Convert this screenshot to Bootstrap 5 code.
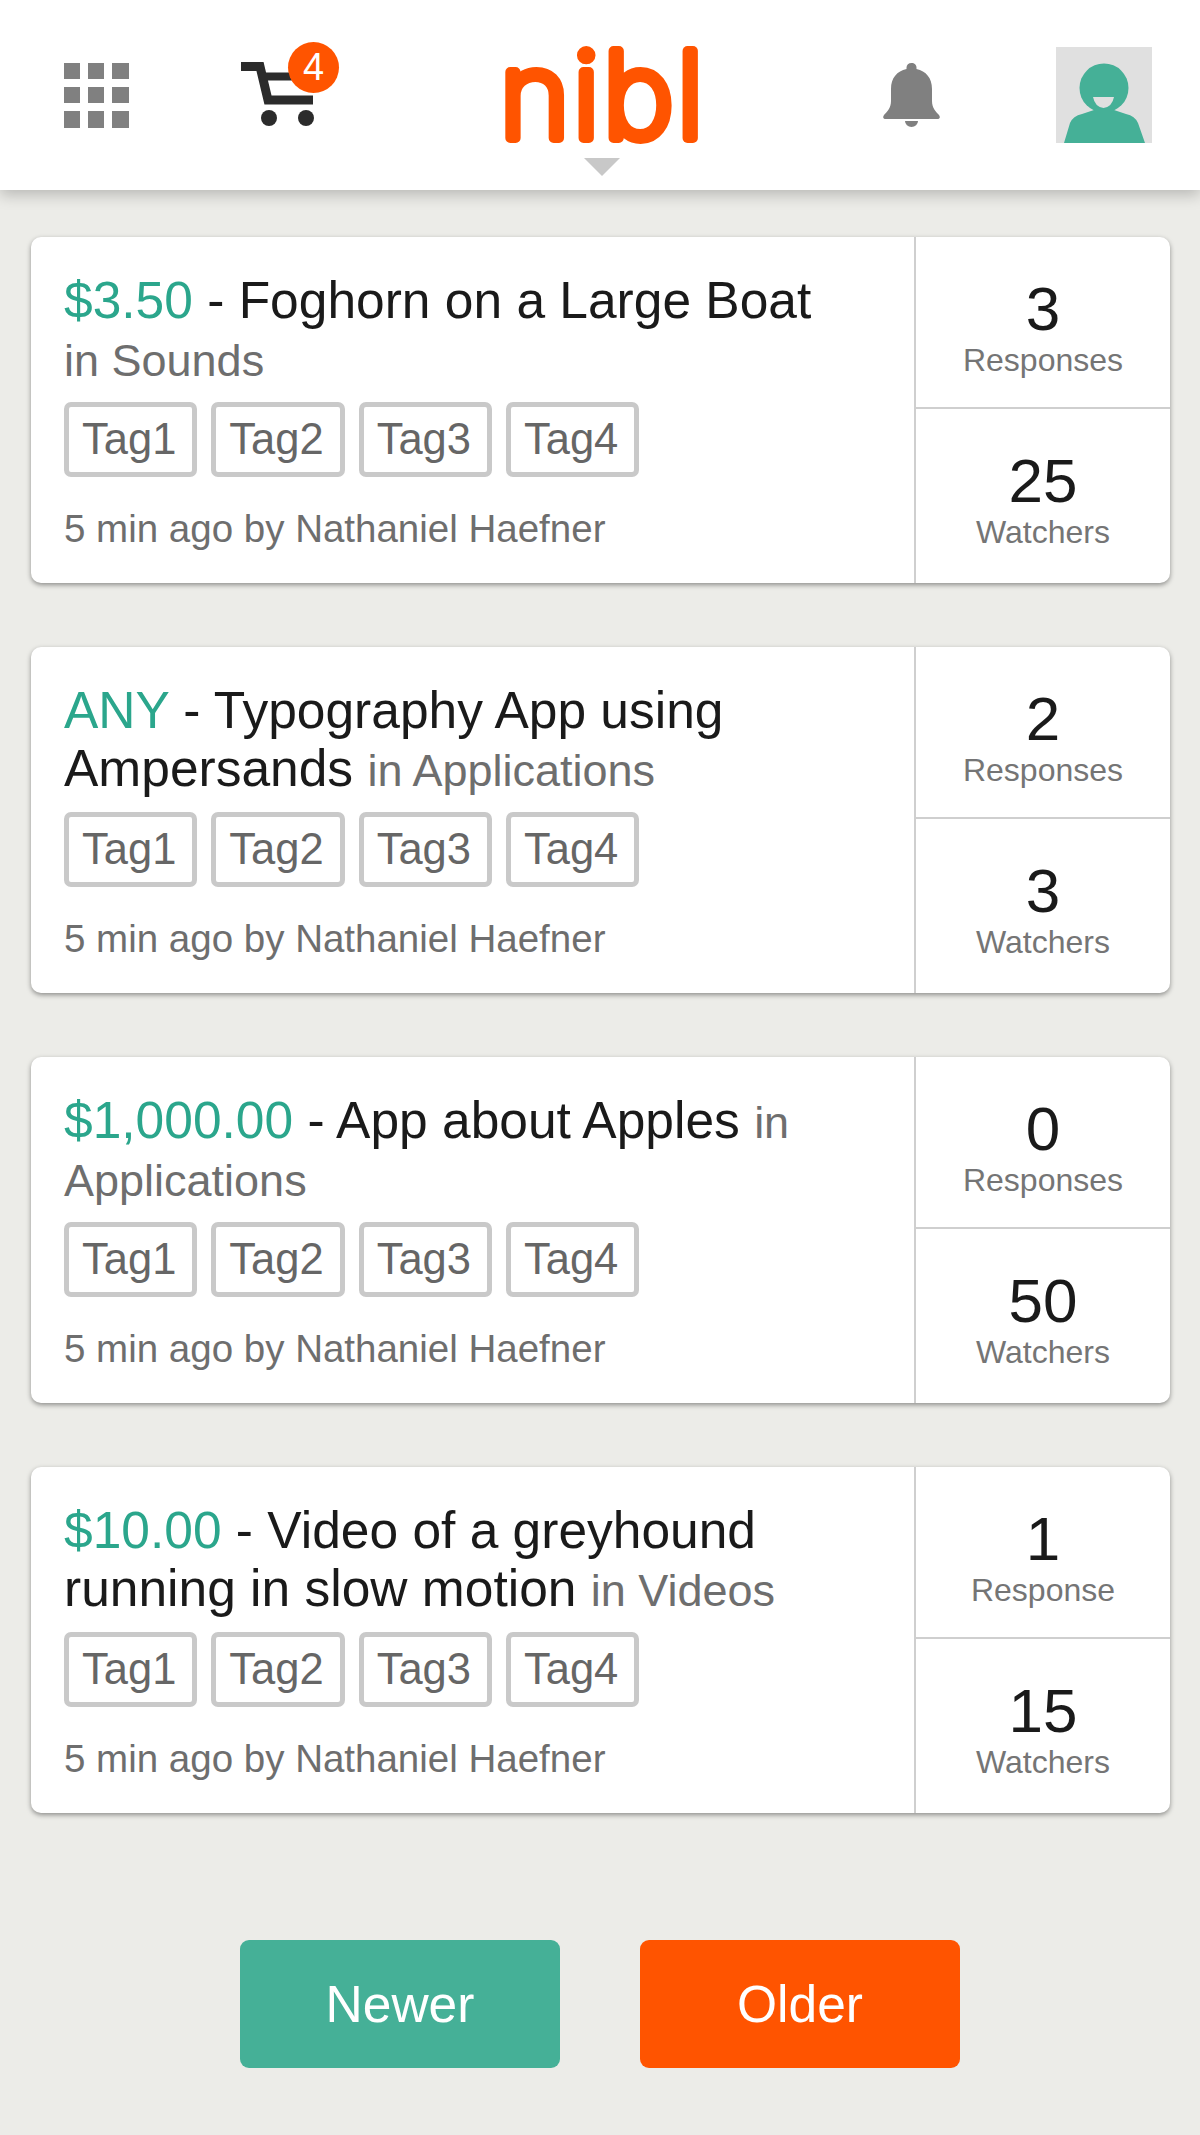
<!DOCTYPE html>
<html lang="en">
<head>
<meta charset="utf-8">
<title>nibl</title>
<link href="https://cdn.jsdelivr.net/npm/bootstrap@5.3.0/dist/css/bootstrap.min.css" rel="stylesheet">
<style>
html,body{margin:0;background:#ecece8;}
body{font-family:"Liberation Sans",Arial,sans-serif;min-height:2135px;width:1200px;overflow-x:hidden;}
.top-bar{height:190px;background:#fff;box-shadow:0 5px 14px rgba(0,0,0,.22);padding-left:64px;}
.grid-ic{width:65px;height:65px;display:block;}
.cart-wrap{width:98px;height:85px;margin-left:112px;margin-top:-22px;}
.cart-ic{width:75px;height:65px;left:0;top:20px;}
.cart-count{width:51px;height:51px;border-radius:50%;background:#ff5400;color:#fff;font-size:38px;line-height:51px;text-align:center;right:0;top:0;}
.logo-word{width:195px;height:96px;margin-left:165px;display:block;overflow:visible;}
.logo-word text{font-family:Inter,sans-serif;font-weight:200;font-size:120px;letter-spacing:3px;fill:#ff5400;stroke:#ff5400;stroke-width:10px;stroke-linejoin:round;}
.logo-caret{left:584px;top:158px;width:0;height:0;border-left:18.5px solid transparent;border-right:18.5px solid transparent;border-top:18px solid #c8c8c8;}
.bell-ic{width:57px;height:64px;margin-left:184px;display:block;}
.avatar-ic{width:96px;height:96px;margin-left:116px;display:block;}
.feed{padding:47px 30px 0 31px;gap:64px;}
.post{height:346px;border:0;border-radius:10px;background:#fff;box-shadow:0 2px 5px rgba(0,0,0,.4);overflow:hidden;}
.post-main{width:883px;padding:34px 75px 0 33px;}
.post-title{font-size:51.5px;line-height:58px;color:#1a1a1a;margin:0;font-weight:400;min-height:116px;}
.price{color:#2ba68c;}
.cat{font-size:45px;line-height:1;color:#6e6e6e;}
.tag-row{gap:14px;margin-top:15px;}
.tag-box{height:75px;border:5px solid #c9c9c9;border-radius:7px;padding:0 16px 0 13px;font-size:43.5px;line-height:65px;color:#666;}
.post-meta{font-size:38.5px;line-height:46px;color:#6e6e6e;margin-top:29px;white-space:nowrap;}
.post-stats{width:256px;border-left:2px solid #cfcfcf;}
.stat-cell{padding-top:41px;text-align:center;}
.stat-cell:first-child{flex:0 0 170px;}
.stat-cell+.stat-cell{flex:1 1 0;border-top:2px solid #cfcfcf;}
.stat-num{font-size:62px;line-height:62px;color:#1a1a1a;}
.stat-lbl{font-size:32px;line-height:38px;color:#757575;margin-top:1px;}
.pager{gap:80px;margin-top:127px;}
.pg-btn{width:320px;height:128px;border:0;border-radius:9px;color:#fff;font-size:51.5px;line-height:122px;padding:3px 0 0;}
.pg-new{background:#45b097;}
.pg-new:hover{background:#45b097;color:#fff;}
.pg-old{background:#ff5400;}
.pg-old:hover{background:#ff5400;color:#fff;}
</style>
</head>
<body>
<header class="top-bar d-flex align-items-center position-relative">
  <svg class="grid-ic" viewBox="0 0 65 65" aria-hidden="true"><g fill="#808080"><rect x="0" y="0" width="16" height="16"/><rect x="24" y="0" width="16" height="16"/><rect x="48" y="0" width="17" height="16"/><rect x="0" y="24" width="16" height="16"/><rect x="24" y="24" width="16" height="16"/><rect x="48" y="24" width="17" height="16"/><rect x="0" y="48" width="16" height="17"/><rect x="24" y="48" width="16" height="17"/><rect x="48" y="48" width="17" height="17"/></g></svg>
  <div class="cart-wrap position-relative">
    <svg class="cart-ic position-absolute" viewBox="0 0 75 65" aria-hidden="true"><path d="M0 4.500H19L27 38H72" fill="none" stroke="#2b2b2b" stroke-width="9"/><path d="M21 14.500H60" fill="none" stroke="#2b2b2b" stroke-width="8"/><circle cx="28" cy="56" r="8" fill="#2b2b2b"/><circle cx="65" cy="56" r="8" fill="#2b2b2b"/></svg>
    <span class="cart-count position-absolute">4</span>
  </div>
  <svg class="logo-word" viewBox="0 0 195 96"><text x="99" y="91" text-anchor="middle">nibl</text></svg>
  <svg class="bell-ic" viewBox="0 0 57 64" aria-hidden="true"><path fill="#808080" d="M28.500 0c-3 0-5 2-5 4.500V6C14 8 8 15 8 26v12c0 7-4 11-7 14-2 3 0 4 2 4h51c2 0 4-1 2-4-3-3-7-7-7-14V26c0-11-6-18-15.500-20V4.500C33.500 2 31.500 0 28.500 0z"/><path fill="#808080" d="M22 58h13a6.500 6 0 0 1-13 0z"/></svg>
  <svg class="avatar-ic" viewBox="0 0 96 96" aria-hidden="true"><rect width="96" height="96" fill="#e0e0e0"/><circle cx="48" cy="41" r="24.500" fill="#45b097"/><path fill="#45b097" d="M8 96l6-20q3-7 12-9l12-4h20l12 4q9 2 12 9l7 20z"/><path fill="#e0e0e0" d="M37 50h21q-2 10-10.500 11Q39 60 37 50z"/></svg>
  <span class="logo-caret position-absolute"></span>
</header>

<main class="feed d-flex flex-column">
  <article class="card post flex-row">
    <div class="post-main">
      <h2 class="post-title"><span class="price">$3.50</span> - Foghorn on a Large Boat<br><span class="cat">in Sounds</span></h2>
      <div class="tag-row d-flex"><span class="tag-box">Tag1</span><span class="tag-box">Tag2</span><span class="tag-box">Tag3</span><span class="tag-box">Tag4</span></div>
      <div class="post-meta">5 min ago by Nathaniel Haefner</div>
    </div>
    <div class="post-stats d-flex flex-column">
      <div class="stat-cell"><div class="stat-num">3</div><div class="stat-lbl">Responses</div></div>
      <div class="stat-cell"><div class="stat-num">25</div><div class="stat-lbl">Watchers</div></div>
    </div>
  </article>

  <article class="card post flex-row">
    <div class="post-main">
      <h2 class="post-title"><span class="price">ANY</span> - Typography App using Ampersands <span class="cat">in Applications</span></h2>
      <div class="tag-row d-flex"><span class="tag-box">Tag1</span><span class="tag-box">Tag2</span><span class="tag-box">Tag3</span><span class="tag-box">Tag4</span></div>
      <div class="post-meta">5 min ago by Nathaniel Haefner</div>
    </div>
    <div class="post-stats d-flex flex-column">
      <div class="stat-cell"><div class="stat-num">2</div><div class="stat-lbl">Responses</div></div>
      <div class="stat-cell"><div class="stat-num">3</div><div class="stat-lbl">Watchers</div></div>
    </div>
  </article>

  <article class="card post flex-row">
    <div class="post-main">
      <h2 class="post-title"><span class="price">$1,000.00</span> - App about Apples <span class="cat">in Applications</span></h2>
      <div class="tag-row d-flex"><span class="tag-box">Tag1</span><span class="tag-box">Tag2</span><span class="tag-box">Tag3</span><span class="tag-box">Tag4</span></div>
      <div class="post-meta">5 min ago by Nathaniel Haefner</div>
    </div>
    <div class="post-stats d-flex flex-column">
      <div class="stat-cell"><div class="stat-num">0</div><div class="stat-lbl">Responses</div></div>
      <div class="stat-cell"><div class="stat-num">50</div><div class="stat-lbl">Watchers</div></div>
    </div>
  </article>

  <article class="card post flex-row">
    <div class="post-main">
      <h2 class="post-title"><span class="price">$10.00</span> - Video of a greyhound running in slow motion <span class="cat">in Videos</span></h2>
      <div class="tag-row d-flex"><span class="tag-box">Tag1</span><span class="tag-box">Tag2</span><span class="tag-box">Tag3</span><span class="tag-box">Tag4</span></div>
      <div class="post-meta">5 min ago by Nathaniel Haefner</div>
    </div>
    <div class="post-stats d-flex flex-column">
      <div class="stat-cell"><div class="stat-num">1</div><div class="stat-lbl">Response</div></div>
      <div class="stat-cell"><div class="stat-num">15</div><div class="stat-lbl">Watchers</div></div>
    </div>
  </article>
</main>
<nav class="pager d-flex justify-content-center">
  <a class="btn pg-btn pg-new" href="#">Newer</a>
  <a class="btn pg-btn pg-old" href="#">Older</a>
</nav>
<script src="https://cdn.jsdelivr.net/npm/bootstrap@5.3.0/dist/js/bootstrap.bundle.min.js"></script>
</body>
</html>
